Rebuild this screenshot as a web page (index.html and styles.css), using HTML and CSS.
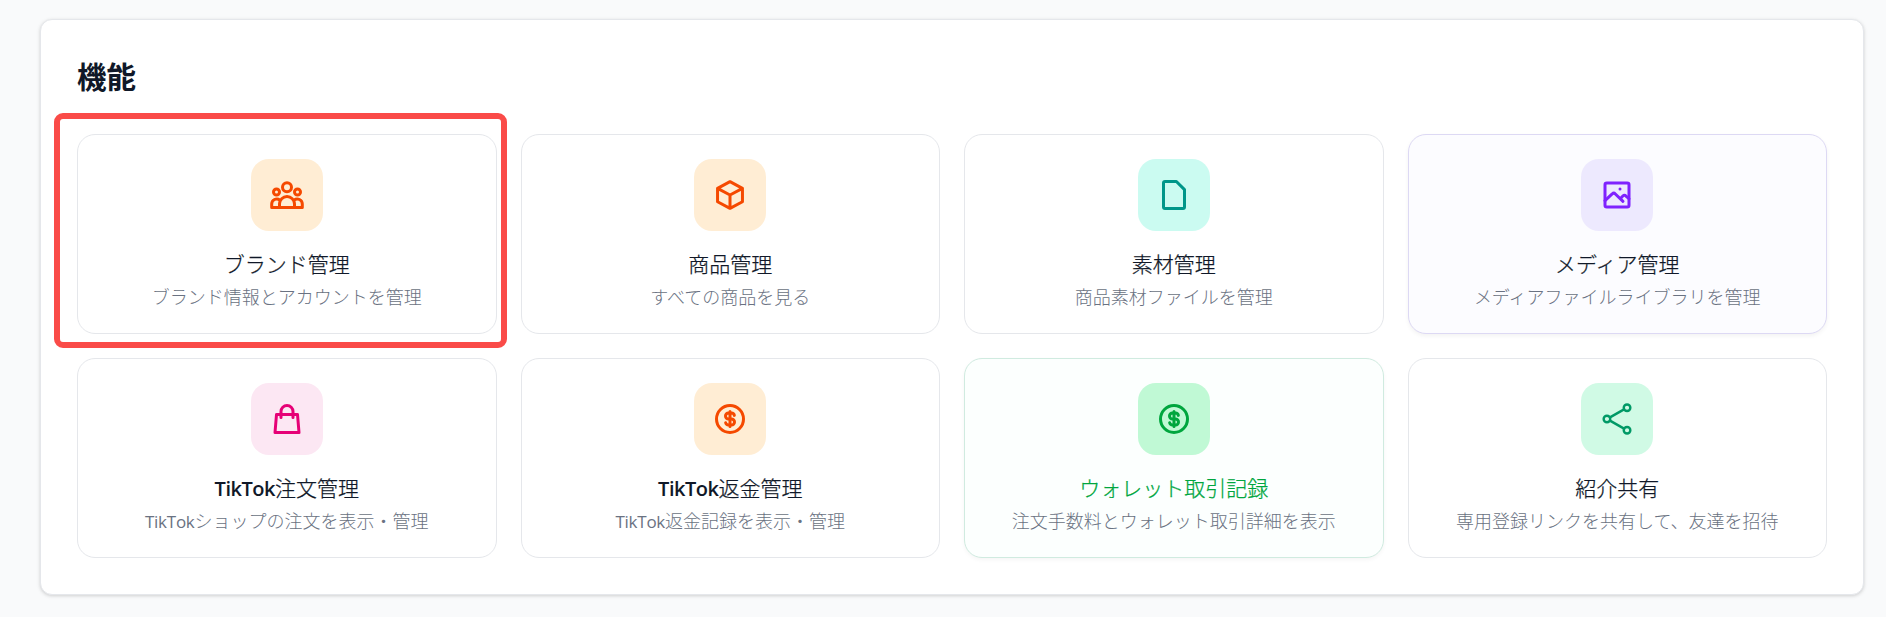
FILE: index.html
```html
<!DOCTYPE html>
<html lang="ja">
<head>
<meta charset="utf-8">
<title>機能</title>
<link rel="stylesheet" href="styles.css">
</head>
<body>
<main class="panel">
  <h1 class="heading">機能</h1>
  <div class="grid">
    <article class="card highlighted">
      <div class="tile orange"><svg viewBox="0 0 24 24"><circle cx="12" cy="6.9" r="3"/><circle cx="5" cy="10" r="2"/><circle cx="19" cy="10" r="2"/><path d="M7 20.3V18a5 5 0 0 1 10 0v2.3M7.2 15.3A3.4 3.4 0 0 0 1.8 18v2.3h20.4V18a3.4 3.4 0 0 0-5.4-2.7"/></svg></div>
      <h2 class="title">ブランド管理</h2>
      <p class="desc">ブランド情報とアカウントを管理</p>
    </article>
    <article class="card">
      <div class="tile orange"><svg viewBox="0 0 24 24"><path d="M12 3.1l8.3 4.5v8.9L12 20.9l-8.3-4.4V7.6zM3.7 7.6L12 12l8.3-4.4M12 12v8.9"/></svg></div>
      <h2 class="title">商品管理</h2>
      <p class="desc">すべての商品を見る</p>
    </article>
    <article class="card">
      <div class="tile teal"><svg viewBox="0 0 24 24"><path d="M6 3h7.6L19 8.4V20a1 1 0 0 1-1 1H6a1 1 0 0 1-1-1V4a1 1 0 0 1 1-1z"/></svg></div>
      <h2 class="title">素材管理</h2>
      <p class="desc">商品素材ファイルを管理</p>
    </article>
    <article class="card tint-violet">
      <div class="tile violet"><svg viewBox="0 0 24 24"><rect x="4" y="4" width="16" height="16" rx="1.2"/><path d="M4 15.8l4.8-4.5a1.5 1.5 0 0 1 2.1 0L16 16.2M14.3 14.3l1.6-1.6a1.5 1.5 0 0 1 2.1 0l2 1.8"/><circle class="dot" cx="14" cy="8" r="1"/></svg></div>
      <h2 class="title">メディア管理</h2>
      <p class="desc">メディアファイルライブラリを管理</p>
    </article>
    <article class="card">
      <div class="tile pink"><svg viewBox="0 0 24 24"><path d="M5 9h14l1 12H4zM8 11V7a4 4 0 0 1 8 0v4"/></svg></div>
      <h2 class="title"><span class="latin">TikTok</span>注文管理</h2>
      <p class="desc"><span class="latin">TikTok</span>ショップの注文を表示・管理</p>
    </article>
    <article class="card">
      <div class="tile orange"><svg viewBox="0 0 24 24"><circle cx="12" cy="12" r="9"/><path d="M14.9 9.6A2 2 0 0 0 13 8h-2a2 2 0 0 0 0 4h2a2 2 0 0 1 0 4h-2a2 2 0 0 1-1.9-1.5M12 7v10"/></svg></div>
      <h2 class="title"><span class="latin">TikTok</span>返金管理</h2>
      <p class="desc"><span class="latin">TikTok</span>返金記録を表示・管理</p>
    </article>
    <article class="card tint-green">
      <div class="tile green"><svg viewBox="0 0 24 24"><circle cx="12" cy="12" r="9"/><path d="M14.9 9.6A2 2 0 0 0 13 8h-2a2 2 0 0 0 0 4h2a2 2 0 0 1 0 4h-2a2 2 0 0 1-1.9-1.5M12 7v10"/></svg></div>
      <h2 class="title">ウォレット取引記録</h2>
      <p class="desc">注文手数料とウォレット取引詳細を表示</p>
    </article>
    <article class="card">
      <div class="tile emerald"><svg class="thin" viewBox="0 0 24 24"><circle cx="5.3" cy="12" r="2.2"/><circle cx="18.7" cy="4.5" r="2.2"/><circle cx="18.7" cy="19.5" r="2.2"/><path d="M7.3 10.9l9.4-5.3M7.3 13.1l9.4 5.3"/></svg></div>
      <h2 class="title">紹介共有</h2>
      <p class="desc">専用登録リンクを共有して、友達を招待</p>
    </article>
  </div>
</main>
</body>
</html>
```
FILE: styles.css
```css
* { box-sizing: border-box; margin: 0; padding: 0; }

body {
  padding: 19px 22px 22px 40px;
  background: #f9fafb;
  color: #101828;
  font-family: "Noto Sans CJK JP", sans-serif;
  overflow: hidden;
}

.panel {
  width: 1824px;
  height: 576px;
  padding: 36px;
  background: #fff;
  border: 1px solid #e5e7eb;
  border-radius: 12px;
  box-shadow: 0 1px 4px rgba(0, 0, 0, .1), 0 1px 3px rgba(0, 0, 0, .08);
}

.heading {
  height: 38px;
  margin-bottom: 40px;
  font-size: 29.5px;
  line-height: 38px;
  font-weight: 700;
}

.grid {
  display: grid;
  grid-template-columns: repeat(4, 1fr);
  grid-auto-rows: 200px;
  gap: 24px;
}

.card {
  position: relative;
  display: flex;
  flex-direction: column;
  align-items: center;
  padding: 24px 24px 20px;
  background: #fff;
  border: 1px solid #e5e7eb;
  border-radius: 18px;
}

/* Callout frame around the selected feature */
.highlighted::after {
  content: "";
  position: absolute;
  inset: -22.5px -11px -15px -24px;
  border: 6px solid #fa4b48;
  border-radius: 9px;
}

.tint-violet {
  background: #fcfcff;
  border-color: #ddd9f4;
  box-shadow: 0 2px 4px rgba(0, 0, 0, .05);
}

.tint-green {
  background: #fcfffe;
  border-color: #d0ebe0;
  box-shadow: 0 2px 4px rgba(0, 0, 0, .04);
}

.tile {
  display: flex;
  flex-shrink: 0;
  align-items: center;
  justify-content: center;
  width: 72px;
  height: 72px;
  margin-bottom: 18px;
  border-radius: 18px;
}

.tile svg {
  width: 36px;
  height: 36px;
  fill: none;
  stroke: currentColor;
  stroke-width: 2;
  stroke-linecap: round;
  stroke-linejoin: round;
}

.tile .thin { stroke-width: 1.6; }
.tile .dot { fill: currentColor; stroke: none; }

.orange { background: #ffedd4; color: #f54900; }
.teal { background: #cbfbf1; color: #009689; }
.violet { background: #ede9fe; color: #7f22fe; }
.pink { background: #fce7f3; color: #e60076; }
.green { background: #c0f9d5; color: #00a63e; }
.emerald { background: #d0fae5; color: #009966; }

.title {
  margin-bottom: 5px;
  font-size: 21px;
  line-height: 28px;
  font-weight: 300;
  -webkit-text-stroke: .25px currentColor;
  white-space: nowrap;
}

.tint-green .title { color: #00a63e; }

.desc {
  color: #6a7282;
  font-size: 18px;
  line-height: 29px;
  font-weight: 300;
  white-space: nowrap;
}

.latin {
  font-family: "Open Sans", "Noto Sans", sans-serif;
  line-height: 0;
  -webkit-text-stroke: 0;
}

.title .latin { font-weight: 600; font-size: 20px; letter-spacing: -.5px; }
.desc .latin { font-weight: 400; font-size: 17px; letter-spacing: -.25px; }
```
